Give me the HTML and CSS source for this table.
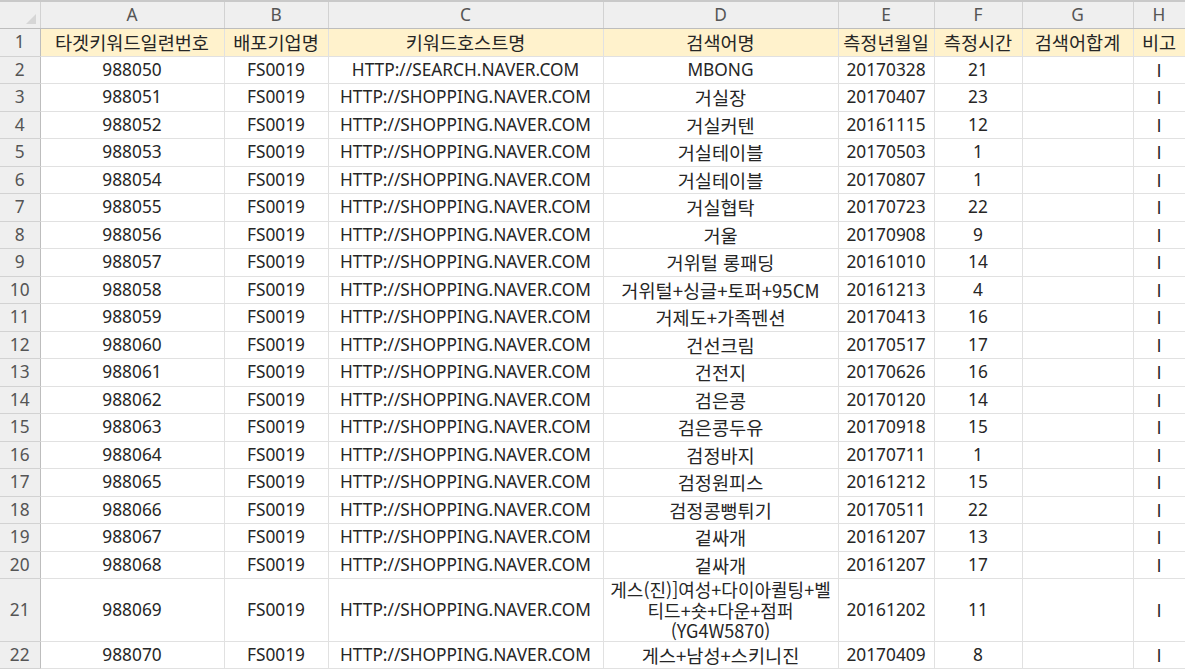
FILE: index.html
```html
<!DOCTYPE html>
<html lang="ko">
<head>
<meta charset="utf-8">
<title>Sheet</title>
<link rel="stylesheet" href="styles.css">
</head>
<body>
<table class="sheet">
  <colgroup>
    <col class="c-rh"><col class="c-a"><col class="c-b"><col class="c-c"><col class="c-d"><col class="c-e"><col class="c-f"><col class="c-g"><col class="c-h">
  </colgroup>
  <thead>
    <tr class="colhead">
      <th class="corner"><div class="corner-in"><span class="tri"></span></div></th>
      <th>A</th><th>B</th><th>C</th><th>D</th><th>E</th><th>F</th><th>G</th><th>H</th>
    </tr>
  </thead>
  <tbody>
    <tr class="title"><th class="rh">1</th><td>타겟키워드일련번호</td><td>배포기업명</td><td>키워드호스트명</td><td>검색어명</td><td>측정년월일</td><td>측정시간</td><td>검색어합계</td><td>비고</td></tr>
    <tr><th class="rh">2</th><td>988050</td><td>FS0019</td><td>HTTP://SEARCH.NAVER.COM</td><td>MBONG</td><td>20170328</td><td>21</td><td></td><td class="bar">I</td></tr>
    <tr><th class="rh">3</th><td>988051</td><td>FS0019</td><td>HTTP://SHOPPING.NAVER.COM</td><td class="ko">거실장</td><td>20170407</td><td>23</td><td></td><td class="bar">I</td></tr>
    <tr><th class="rh">4</th><td>988052</td><td>FS0019</td><td>HTTP://SHOPPING.NAVER.COM</td><td class="ko">거실커텐</td><td>20161115</td><td>12</td><td></td><td class="bar">I</td></tr>
    <tr><th class="rh">5</th><td>988053</td><td>FS0019</td><td>HTTP://SHOPPING.NAVER.COM</td><td class="ko">거실테이블</td><td>20170503</td><td>1</td><td></td><td class="bar">I</td></tr>
    <tr><th class="rh">6</th><td>988054</td><td>FS0019</td><td>HTTP://SHOPPING.NAVER.COM</td><td class="ko">거실테이블</td><td>20170807</td><td>1</td><td></td><td class="bar">I</td></tr>
    <tr><th class="rh">7</th><td>988055</td><td>FS0019</td><td>HTTP://SHOPPING.NAVER.COM</td><td class="ko">거실협탁</td><td>20170723</td><td>22</td><td></td><td class="bar">I</td></tr>
    <tr><th class="rh">8</th><td>988056</td><td>FS0019</td><td>HTTP://SHOPPING.NAVER.COM</td><td class="ko">거울</td><td>20170908</td><td>9</td><td></td><td class="bar">I</td></tr>
    <tr><th class="rh">9</th><td>988057</td><td>FS0019</td><td>HTTP://SHOPPING.NAVER.COM</td><td class="ko">거위털 롱패딩</td><td>20161010</td><td>14</td><td></td><td class="bar">I</td></tr>
    <tr><th class="rh">10</th><td>988058</td><td>FS0019</td><td>HTTP://SHOPPING.NAVER.COM</td><td class="ko">거위털+싱글+토퍼+95CM</td><td>20161213</td><td>4</td><td></td><td class="bar">I</td></tr>
    <tr><th class="rh">11</th><td>988059</td><td>FS0019</td><td>HTTP://SHOPPING.NAVER.COM</td><td class="ko">거제도+가족펜션</td><td>20170413</td><td>16</td><td></td><td class="bar">I</td></tr>
    <tr><th class="rh">12</th><td>988060</td><td>FS0019</td><td>HTTP://SHOPPING.NAVER.COM</td><td class="ko">건선크림</td><td>20170517</td><td>17</td><td></td><td class="bar">I</td></tr>
    <tr><th class="rh">13</th><td>988061</td><td>FS0019</td><td>HTTP://SHOPPING.NAVER.COM</td><td class="ko">건전지</td><td>20170626</td><td>16</td><td></td><td class="bar">I</td></tr>
    <tr><th class="rh">14</th><td>988062</td><td>FS0019</td><td>HTTP://SHOPPING.NAVER.COM</td><td class="ko">검은콩</td><td>20170120</td><td>14</td><td></td><td class="bar">I</td></tr>
    <tr><th class="rh">15</th><td>988063</td><td>FS0019</td><td>HTTP://SHOPPING.NAVER.COM</td><td class="ko">검은콩두유</td><td>20170918</td><td>15</td><td></td><td class="bar">I</td></tr>
    <tr><th class="rh">16</th><td>988064</td><td>FS0019</td><td>HTTP://SHOPPING.NAVER.COM</td><td class="ko">검정바지</td><td>20170711</td><td>1</td><td></td><td class="bar">I</td></tr>
    <tr><th class="rh">17</th><td>988065</td><td>FS0019</td><td>HTTP://SHOPPING.NAVER.COM</td><td class="ko">검정원피스</td><td>20161212</td><td>15</td><td></td><td class="bar">I</td></tr>
    <tr><th class="rh">18</th><td>988066</td><td>FS0019</td><td>HTTP://SHOPPING.NAVER.COM</td><td class="ko">검정콩뻥튀기</td><td>20170511</td><td>22</td><td></td><td class="bar">I</td></tr>
    <tr><th class="rh">19</th><td>988067</td><td>FS0019</td><td>HTTP://SHOPPING.NAVER.COM</td><td class="ko">겉싸개</td><td>20161207</td><td>13</td><td></td><td class="bar">I</td></tr>
    <tr><th class="rh">20</th><td>988068</td><td>FS0019</td><td>HTTP://SHOPPING.NAVER.COM</td><td class="ko">겉싸개</td><td>20161207</td><td>17</td><td></td><td class="bar">I</td></tr>
    <tr class="tall"><th class="rh">21</th><td>988069</td><td>FS0019</td><td>HTTP://SHOPPING.NAVER.COM</td><td class="ko wrap"><div class="ln">게스(진)]여성+다이아퀼팅+벨</div><div class="ln">티드+숏+다운+점퍼</div><div class="ln">(YG4W5870)</div></td><td>20161202</td><td>11</td><td></td><td class="bar">I</td></tr>
    <tr><th class="rh">22</th><td>988070</td><td>FS0019</td><td>HTTP://SHOPPING.NAVER.COM</td><td class="ko">게스+남성+스키니진</td><td>20170409</td><td>8</td><td></td><td class="bar">I</td></tr>
  </tbody>
</table>
</body>
</html>
```

FILE: styles.css
```css
html, body {
  margin: 0;
  padding: 0;
  background: #ffffff;
  overflow: hidden;
}

body {
  font-family: "Noto Sans", "Noto Sans CJK KR", sans-serif;
  font-size: 17.3px;
  color: #262626;
}

.sheet {
  border-collapse: collapse;
  table-layout: fixed;
  width: 1185px;
  border-top: 2px solid #c9c9c9;
}

.c-rh { width: 40px; }
.c-a { width: 184px; }
.c-b { width: 104px; }
.c-c { width: 275px; }
.c-d { width: 235px; }
.c-e { width: 96px; }
.c-f { width: 88px; }
.c-g { width: 111px; }
.c-h { width: 52px; }

.sheet th,
.sheet td {
  padding: 0;
  text-align: center;
  vertical-align: middle;
  white-space: nowrap;
  overflow: hidden;
  font-weight: normal;
  line-height: 20px;
}

.sheet td {
  border: 1px solid #e1e1e1;
}

.colhead th {
  height: 26px;
  background: #efefef;
  color: #555555;
  border-right: 1px solid #d2d2d2;
  border-bottom: 1px solid #bdbdbd;
}

.corner {
  border-right: 1px solid #bdbdbd;
}

.corner-in {
  height: 26px;
  display: flex;
  justify-content: flex-end;
  align-items: flex-end;
  padding: 0 4px 4px 0;
  box-sizing: border-box;
}

.tri {
  width: 0;
  height: 0;
  border-left: 10px solid transparent;
  border-bottom: 10px solid #d6d6d6;
}

tbody tr {
  height: 27.5px;
}

.rh {
  background: #efefef;
  color: #555555;
  border-right: 1px solid #bdbdbd;
  border-bottom: 1px solid #d2d2d2;
}

.title td {
  background: #fff2cc;
  font-family: "Noto Sans CJK KR", sans-serif;
  font-size: 18.6px;
}

.ko {
  font-family: "Noto Sans CJK KR", sans-serif;
  font-size: 18.6px;
}

.bar {
  font-family: "Noto Sans CJK KR", sans-serif;
}

.tall {
  height: 62px;
}

.wrap {
  font-size: 18px;
}

.ln {
  height: 20.5px;
  line-height: 20.5px;
}
```
